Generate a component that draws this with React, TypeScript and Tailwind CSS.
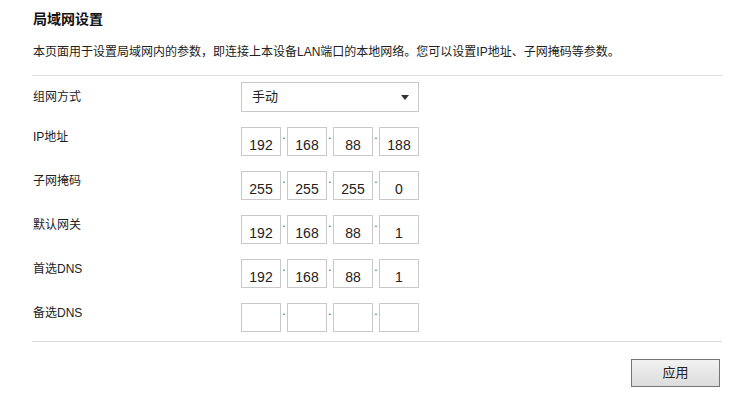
import React from "react";

const font = { fontFamily: '"Liberation Sans", "Noto Sans CJK SC", sans-serif' };

function IpBoxes({ values }: { values: string[] }) {
  return (
    <div className="flex">
      {values.map((v, i) => (
        <React.Fragment key={i}>
          {i > 0 && (
            <div className="w-[6px] flex justify-center text-[12px] leading-[16px] text-[#555]">.</div>
          )}
          <div className="w-[40px] h-[29px] border border-[#c9c9c9] bg-white text-center text-[14px] leading-[16px] pt-[9px] text-[#222]">
            {v}
          </div>
        </React.Fragment>
      ))}
    </div>
  );
}

function Row({ label, values }: { label: string; values: string[] }) {
  return (
    <div className="flex items-start mt-[15px]">
      <div className="w-[208px] text-[12px] leading-[16px] pt-[2px] text-[#222]">{label}</div>
      <IpBoxes values={values} />
    </div>
  );
}

export default function App() {
  return (
    <div className="w-[746px] h-[412px] bg-white pl-[32px] pr-[24px] pt-[10px]" style={font}>
      <div className="pl-[1px] text-[14px] font-bold leading-[18px] text-[#111]">局域网设置</div>
      <div className="pl-[1px] mt-[16px] text-[12px] leading-[16px] text-[#222]">
        本页面用于设置局域网内的参数，即连接上本设备LAN端口的本地网络。您可以设置IP地址、子网掩码等参数。
      </div>
      <div className="mt-[15px] border-t border-[#dcdcdc]" />
      <div className="pl-[1px]">
        <div className="flex items-center mt-[6px]">
          <div className="w-[208px] text-[12px] leading-[16px] text-[#222]">组网方式</div>
          <div className="w-[178px] h-[30px] border border-[#c9c9c9] flex items-center justify-between pl-[10px] pr-[9px] text-[13px] text-[#222]">
            <span>手动</span>
            <svg width="8" height="5" viewBox="0 0 8 5">
              <path d="M0 0 L8 0 L4 5 Z" fill="#333" />
            </svg>
          </div>
        </div>
        <Row label="IP地址" values={["192", "168", "88", "188"]} />
        <Row label="子网掩码" values={["255", "255", "255", "0"]} />
        <Row label="默认网关" values={["192", "168", "88", "1"]} />
        <Row label="首选DNS" values={["192", "168", "88", "1"]} />
        <Row label="备选DNS" values={["", "", "", ""]} />
      </div>
      <div className="mt-[9px] border-t border-[#dcdcdc]" />
      <div className="flex justify-end pr-[2px] mt-[17px]">
        <button className="w-[89px] h-[28px] border border-[#767676] bg-gradient-to-b from-[#f2f2f2] to-[#dcdcdc] text-[13px] text-[#222]">
          应用
        </button>
      </div>
    </div>
  );
}
